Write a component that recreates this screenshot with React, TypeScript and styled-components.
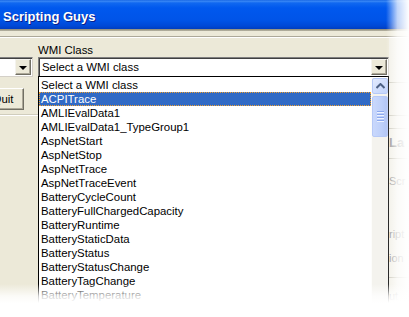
import styled, { createGlobalStyle } from "styled-components"

const GlobalStyle = createGlobalStyle`
	html, body {
		margin: 0;
		padding: 0;
		background: #fff;
		overflow: hidden;
	}
	body {
		font-family: "Liberation Sans", Arial, sans-serif;
		font-size: 11.4px;
	}
`

const wmiClasses = [
	"Select a WMI class",
	"ACPITrace",
	"AMLIEvalData1",
	"AMLIEvalData1_TypeGroup1",
	"AspNetStart",
	"AspNetStop",
	"AspNetTrace",
	"AspNetTraceEvent",
	"BatteryCycleCount",
	"BatteryFullChargedCapacity",
	"BatteryRuntime",
	"BatteryStaticData",
	"BatteryStatus",
	"BatteryStatusChange",
	"BatteryTagChange",
	"BatteryTemperature",
	"BatteryTrip",
]

const SELECTED = 1

const App = () => {
	return (
		<Window>
			<GlobalStyle />
			<TitleBar>
				<Title>Scripting Guys</Title>
			</TitleBar>
			<TitleEdge />
			<Client>
				<Separator />
				<Content>
					<LeftCol>
						<Combo>
							<ComboText />
							<DropButton>
								<Arrow />
							</DropButton>
						</Combo>
						<Button>Quit</Button>
						<GroupLine />
					</LeftCol>

					<MainCol>
						<Label>WMI Class</Label>
						<Combo>
							<ComboText>Select a WMI class</ComboText>
							<DropButton>
								<Arrow />
							</DropButton>
						</Combo>
						<List>
							<Items>
								{wmiClasses.map((name, i) => (
									<Item key={name} $selected={i === SELECTED}>
										{name}
									</Item>
								))}
							</Items>
							<ScrollBar>
								<ScrollUp>
									<svg width="9" height="6" viewBox="0 0 9 6">
										<path d="M0.5 5 L4.5 1 L8.5 5" fill="none" stroke="#4D6185" strokeWidth="2" />
									</svg>
								</ScrollUp>
								<Thumb>
									<Grip />
									<Grip />
									<Grip />
									<Grip />
								</Thumb>
							</ScrollBar>
						</List>
					</MainCol>

					<RightStrip>
						<StripLine $top={44} />
						<StripLine $top={32} />
						<StripLine $top={12} />
						<StripText $top={8} $bold>
							La
						</StripText>
						<StripLine $top={9} />
						<StripText $top={16}>Scr</StripText>
						<StripText $top={41}>ript</StripText>
						<StripText $top={12}>ion</StripText>
						<StripLine $top={13} />
						<StripText $top={12}>ut</StripText>
					</RightStrip>
				</Content>
			</Client>
			<FadeRight />
			<FadeBottom />
		</Window>
	)
}

export default App

const Window = styled.div`
	position: relative;
	width: 409px;
	height: 317px;
	overflow: hidden;
	display: flex;
	flex-direction: column;
	background: #ece9d8;
`

const TitleBar = styled.div`
	height: 29px;
	display: flex;
	align-items: center;
	padding-left: 3px;
	background: linear-gradient(
		to bottom,
		#0a5ae0 0px,
		#3d8bf5 1px,
		#1068f0 3px,
		#0058ee 8px,
		#0054e8 20px,
		#0048d6 26px,
		#003dbf 29px
	);
`

const Title = styled.span`
	font-family: "Liberation Sans", Arial, sans-serif;
	font-weight: 700;
	font-size: 13px;
	color: #fff;
	text-shadow: 1px 1px 0 #0a1e8a;
	margin-top: 3px;
`

const TitleEdge = styled.div`
	height: 2px;
	background: linear-gradient(to bottom, #8c8978, #b9b6a5);
`

const Client = styled.div`
	flex: 1;
	display: flex;
	flex-direction: column;
	padding-top: 5px;
`

const Separator = styled.div`
	height: 1px;
	background: #aca899;
	border-bottom: 1px solid #fff;
`

const Content = styled.div`
	flex: 1;
	display: flex;
	gap: 5px;
`

const LeftCol = styled.div`
	width: 60px;
	margin-left: -27px;
	display: flex;
	flex-direction: column;
	padding-top: 19px;
`

const Combo = styled.div`
	height: 20px;
	display: flex;
	align-items: center;
	background: #fff;
	border-top: 1px solid #808080;
	border-left: 1px solid #808080;
	border-right: 1px solid #d4d0c8;
	border-bottom: 1px solid #d4d0c8;
	box-shadow: inset 1px 1px 0 #404040;
	padding: 0 1px 0 3px;
	box-sizing: border-box;
`

const ComboText = styled.span`
	flex: 1;
	color: #000;
	white-space: nowrap;
`

const DropButton = styled.div`
	width: 16px;
	height: 16px;
	box-sizing: border-box;
	display: flex;
	align-items: center;
	justify-content: center;
	background: #ece9d8;
	border-top: 1px solid #f4f3ee;
	border-left: 1px solid #f4f3ee;
	border-right: 1px solid #716f64;
	border-bottom: 1px solid #716f64;
	box-shadow: inset -1px -1px 0 #aca899;
`

const Arrow = styled.div`
	width: 0;
	height: 0;
	border-left: 4px solid transparent;
	border-right: 4px solid transparent;
	border-top: 4px solid #000;
	margin-top: 1px;
`

const Button = styled.div`
	width: 42px;
	height: 22px;
	box-sizing: border-box;
	align-self: flex-end;
	margin-right: 9px;
	margin-top: 11px;
	display: flex;
	align-items: center;
	justify-content: center;
	background: #ece9d8;
	border-top: 1px solid #fff;
	border-left: 1px solid #fff;
	border-right: 1px solid #716f64;
	border-bottom: 1px solid #716f64;
	box-shadow: inset -1px -1px 0 #aca899;
	color: #000;
`

const GroupLine = styled.div`
	height: 1px;
	margin-top: 4px;
	margin-right: -5px;
	background: #d0cdbd;
	border-bottom: 1px solid #fff;
`

const MainCol = styled.div`
	width: 351px;
	display: flex;
	flex-direction: column;
	padding-top: 6px;
`

const Label = styled.div`
	height: 13px;
	line-height: 13px;
	color: #000;
`

const List = styled.div`
	flex: 1;
	display: flex;
	background: #fff;
	border: 1px solid #000;
	border-bottom: 0;
	margin-top: -1px;
	padding-top: 1px;
`

const Items = styled.div`
	flex: 1;
	display: flex;
	flex-direction: column;
`

const Item = styled.div<{ $selected?: boolean }>`
	height: 14px;
	line-height: 14px;
	padding-left: 2px;
	box-sizing: border-box;
	white-space: nowrap;
	color: ${(p) => (p.$selected ? "#fff" : "#000")};
	background: ${(p) => (p.$selected ? "#316ac5" : "transparent")};
	outline: ${(p) => (p.$selected ? "1px dotted #f0a030" : "none")};
	outline-offset: -1px;
`

const ScrollBar = styled.div`
	width: 17px;
	display: flex;
	flex-direction: column;
	align-items: center;
	background: #f4f3ee;
	border-left: 1px solid #fdfdfb;
	box-sizing: border-box;
`

const ScrollUp = styled.div`
	width: 16px;
	height: 16px;
	box-sizing: border-box;
	display: flex;
	align-items: center;
	justify-content: center;
	border: 1px solid #b6c9f7;
	border-radius: 2px;
	background: linear-gradient(to bottom right, #e2eafe, #c1d3fb);
`

const Thumb = styled.div`
	width: 16px;
	height: 41px;
	margin-top: 2px;
	box-sizing: border-box;
	display: flex;
	flex-direction: column;
	align-items: center;
	justify-content: center;
	gap: 1px;
	border: 1px solid #b6c9f7;
	border-radius: 2px;
	background: linear-gradient(to right, #c9d8fc, #bed0fa 60%, #b3c6f5);
`

const Grip = styled.div`
	width: 7px;
	height: 1px;
	background: #8ca9ef;
	border-bottom: 1px solid #eef3ff;
`

const RightStrip = styled.div`
	flex: 1;
	display: flex;
	flex-direction: column;
	margin-left: -5px;
	overflow: hidden;
	background: #f1efe6;
`

const StripLine = styled.div<{ $top: number }>`
	height: 1px;
	margin-top: ${(p) => p.$top}px;
	background: #c9c6b8;
`

const StripText = styled.div<{ $top: number; $bold?: boolean }>`
	height: 12px;
	line-height: 12px;
	margin-top: ${(p) => p.$top}px;
	font-size: ${(p) => (p.$bold ? "13px" : "11px")};
	font-weight: ${(p) => (p.$bold ? 700 : 400)};
	color: #8a8a8a;
	white-space: nowrap;
`

const FadeRight = styled.div`
	position: absolute;
	top: 0;
	bottom: 0;
	left: 386px;
	right: 0;
	background: linear-gradient(
		to right,
		rgba(255, 255, 255, 0),
		rgba(255, 255, 255, 0.75) 50%,
		#fff
	);
	pointer-events: none;
`

const FadeBottom = styled.div`
	position: absolute;
	left: 0;
	right: 0;
	top: 284px;
	bottom: 0;
	background: linear-gradient(
		to bottom,
		rgba(255, 255, 255, 0),
		rgba(255, 255, 255, 0.8) 12px,
		#fff 19px
	);
	pointer-events: none;
`
